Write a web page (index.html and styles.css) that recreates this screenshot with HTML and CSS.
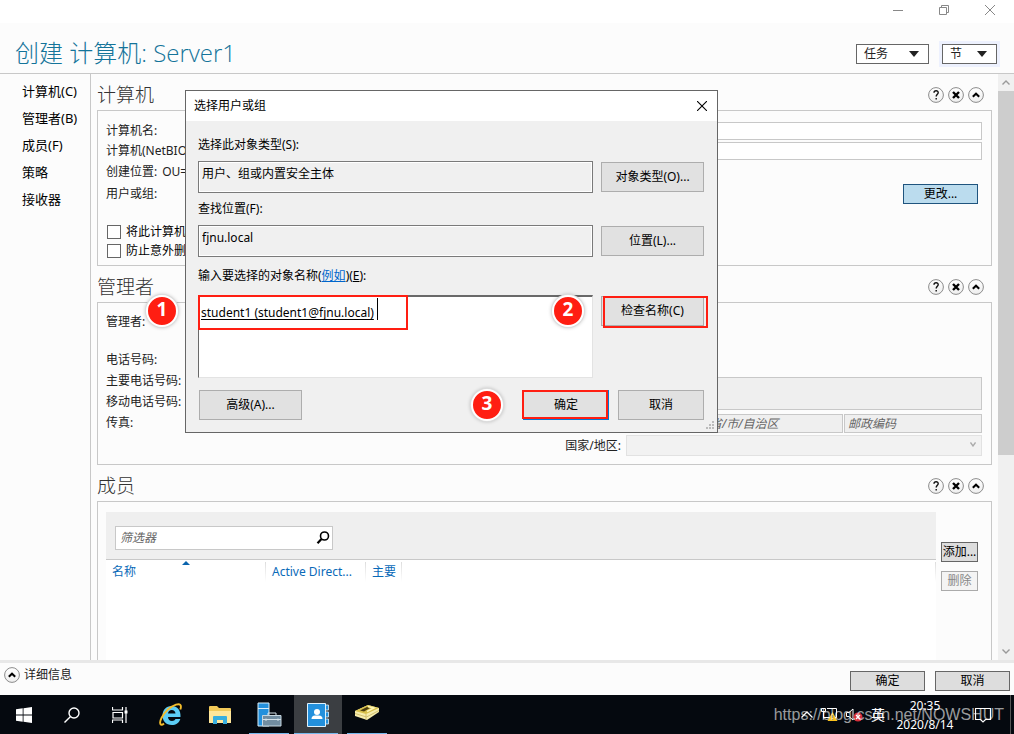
FILE: index.html
```html
<!DOCTYPE html>
<html lang="zh-CN">
<head>
<meta charset="utf-8">
<title>创建 计算机: Server1</title>
<meta name="viewport" content="width=device-width, initial-scale=1">
<link rel="stylesheet" href="styles.css">
</head>
<body>
<svg class="defs" width="0" height="0" aria-hidden="true">
  <defs>
    <linearGradient id="ring" x1="0" y1="0" x2="0" y2="1"><stop offset="0" stop-color="#fff"/><stop offset="1" stop-color="#eee"/></linearGradient>
    <symbol id="help" viewBox="0 0 16 16"><circle cx="8" cy="8" r="7.4" fill="url(#ring)" stroke="#8c8c8c"/><path d="M6 5.8C6 3 10.4 3 10.2 5.8C10.1 7.3 8.2 7.4 8.2 9.6M8.2 11V12.4" fill="none" stroke="#111" stroke-width="1.4"/></symbol>
    <symbol id="remove" viewBox="0 0 16 16"><circle cx="8" cy="8" r="7.4" fill="url(#ring)" stroke="#8c8c8c"/><path d="M5 5L11 11M11 5L5 11" stroke="#000" stroke-width="2.4"/></symbol>
    <symbol id="fold" viewBox="0 0 16 16"><circle cx="8" cy="8" r="7.4" fill="url(#ring)" stroke="#8c8c8c"/><path d="M4.8 9.8L8 6.7L11.2 9.8" fill="none" stroke="#000" stroke-width="2"/></symbol>
  </defs>
</svg>
<div class="desktop">
  <div class="titlebar">
    <button class="caption" aria-label="最小化"><svg width="10" height="10" viewBox="0 0 10 10"><path d="M0 5.5H10" stroke="#888"/></svg></button>
    <button class="caption" aria-label="还原"><svg width="10" height="10" viewBox="0 0 10 10" fill="none" stroke="#888"><path d="M.5 2.5H7.5V9.5H.5ZM2.5 2.5V.5H9.5V7.5H7.5"/></svg></button>
    <button class="caption" aria-label="关闭"><svg width="10" height="10" viewBox="0 0 10 10"><path d="M0 0L10 10M10 0L0 10" stroke="#888"/></svg></button>
  </div>
  <header class="header">
    <h1>创建 计算机: Server1</h1>
    <button class="drop tasks">任务<svg width="10" height="6" viewBox="0 0 10 6"><path d="M0 0H10L5 6Z" fill="#222"/></svg></button>
    <button class="drop sections">节<svg width="10" height="6" viewBox="0 0 10 6"><path d="M0 0H10L5 6Z" fill="#222"/></svg></button>
  </header>
  <div class="main">
    <nav class="side">
      <a href="#computer">计算机(C)</a>
      <a href="#manager">管理者(B)</a>
      <a href="#members">成员(F)</a>
      <a href="#policy">策略</a>
      <a href="#silo">接收器</a>
    </nav>
    <main class="content">
      <section id="computer">
        <div class="head"><h2>计算机</h2>
          <button aria-label="帮助"><svg><use href="#help"/></svg></button><button aria-label="移除"><svg><use href="#remove"/></svg></button><button aria-label="折叠"><svg><use href="#fold"/></svg></button>
        </div>
        <div class="box computer">
          <div class="fields">
            <label for="cname">计算机名:</label><input id="cname" type="text">
            <label for="nbname">计算机(NetBIO</label><input id="nbname" type="text">
            <div class="place"><span>创建位置:</span><span>OU=</span></div>
            <span>用户或组:</span><button class="change">更改...</button>
          </div>
          <label class="tick"><input type="checkbox">将此计算机</label>
          <label class="tick"><input type="checkbox">防止意外删</label>
        </div>
      </section>
      <section id="manager">
        <div class="head"><h2>管理者</h2>
          <button aria-label="帮助"><svg><use href="#help"/></svg></button><button aria-label="移除"><svg><use href="#remove"/></svg></button><button aria-label="折叠"><svg><use href="#fold"/></svg></button>
        </div>
        <div class="box manager">
          <div class="phones">
            <span class="who">管理者:</span>
            <span>电话号码:</span>
            <span>主要电话号码:</span>
            <span>移动电话号码:</span>
            <span>传真:</span>
          </div>
          <div class="address">
            <textarea class="street" aria-label="街道" disabled></textarea>
            <div class="towns">
              <input type="text" aria-label="城市" disabled>
              <input type="text" aria-label="省" placeholder="省/市/自治区" disabled>
              <input type="text" aria-label="邮编" placeholder="邮政编码" disabled>
            </div>
            <label for="country">国家/地区:</label>
            <div class="country"><select id="country" disabled><option></option></select><svg width="6" height="5" viewBox="0 0 6 5"><path d="M.5 .5L3 4L5.5 .5" fill="none" stroke="#aaa" stroke-width="1.3"/></svg></div>
          </div>
        </div>
      </section>
      <section id="members">
        <div class="head"><h2>成员</h2>
          <button aria-label="帮助"><svg><use href="#help"/></svg></button><button aria-label="移除"><svg><use href="#remove"/></svg></button><button aria-label="折叠"><svg><use href="#fold"/></svg></button>
        </div>
        <div class="box members">
          <div class="list">
            <div class="filter"><div class="search"><input type="text" aria-label="筛选器" placeholder="筛选器"><svg width="14" height="14" viewBox="0 0 14 14" fill="none" stroke="#000"><circle cx="8.5" cy="5" r="4" stroke-width="1.6"/><path d="M5.5 8L1.5 12.3" stroke-width="2.2"/></svg></div></div>
            <table>
              <thead><tr><th class="name">名称<svg class="sort" width="8" height="4" viewBox="0 0 8 4"><path d="M0 4L4 0L8 4Z" fill="#0a64ad"/></svg></th><th class="dir">Active Direct...</th><th class="primary">主要</th><th></th></tr></thead>
            </table>
          </div>
          <div class="actions"><button>添加...</button><button disabled>删除</button></div>
        </div>
      </section>
    </main>
    <div class="scroll">
      <button aria-label="向上"><svg width="8" height="5" viewBox="0 0 8 5"><path d="M.5 4.5L4 1L7.5 4.5" fill="none" stroke="#999" stroke-width="1.4"/></svg></button>
      <div class="track"><div class="thumb"></div></div>
      <button aria-label="向下"><svg width="8" height="5" viewBox="0 0 8 5"><path d="M.5 .5L4 4L7.5 .5" fill="none" stroke="#999" stroke-width="1.4"/></svg></button>
    </div>
  </div>
  <footer class="footer">
    <button class="details"><svg><use href="#fold"/></svg>详细信息</button>
    <button class="act">确定</button>
    <button class="act">取消</button>
  </footer>

  <div class="dialog" role="dialog" aria-labelledby="dtitle">
    <div class="dbar"><h3 id="dtitle">选择用户或组</h3><button aria-label="关闭"><svg width="10" height="10" viewBox="0 0 10 10"><path d="M0 0L10 10M10 0L0 10" stroke="#000" stroke-width="1.1"/></svg></button></div>
    <div class="dbody">
      <div class="grid">
        <label for="otype">选择此对象类型(S):</label>
        <input id="otype" type="text" readonly value="用户、组或内置安全主体">
        <button>对象类型(O)...</button>
        <label for="loc">查找位置(F):</label>
        <input id="loc" type="text" readonly value="fjnu.local">
        <button>位置(L)...</button>
        <label for="names">输入要选择的对象名称(<a href="#names">例如</a>)(<u>E</u>):</label>
        <textarea id="names" spellcheck="false">student1 (student1@fjnu.local)</textarea>
        <button>检查名称(C)</button>
      </div>
      <div class="dfoot"><button class="adv">高级(A)...</button><button class="ok">确定</button><button class="cancel">取消</button></div>
    </div>
    <svg class="grip" width="9" height="9" viewBox="0 0 9 9" fill="#bbb"><path d="M6 0h2v2H6zM3 3h2v2H3zM6 3h2v2H6zM0 6h2v2H0zM3 6h2v2H3zM6 6h2v2H6z"/></svg>
    <span class="cursor"></span>
    <span class="mark mark-name"></span><span class="mark mark-check"></span><span class="mark mark-ok"></span>
    <span class="step step-1">1</span><span class="step step-2">2</span><span class="step step-3">3</span>
  </div>

  <div class="taskbar">
    <button class="task" aria-label="开始"><svg width="16" height="16" viewBox="0 0 16 16" fill="#fff"><path d="M0 2.3L6.7 1.3V7.6H0ZM7.5 1.2L16 0V7.6H7.5ZM0 8.4H6.7V14.7L0 13.7ZM7.5 8.4H16V16L7.5 14.8Z"/></svg></button>
    <button class="task" aria-label="搜索"><svg width="16" height="16" viewBox="0 0 16 16" fill="none" stroke="#fff" stroke-width="1.4"><circle cx="10" cy="6" r="5"/><path d="M6.3 9.7L.5 15.5"/></svg></button>
    <button class="task" aria-label="任务视图"><svg width="16" height="16" viewBox="0 0 16 16" fill="none" stroke="#fff" stroke-width="1.2"><path d="M.5 0V3H10.5V0M1 5.5H10.5V11H1ZM.5 16V13H10.5V16M14 0V16"/><path d="M12.5 3.5H15.5V6.5H12.5Z" fill="#fff" stroke="none"/></svg></button>
    <button class="task apps" aria-label="Internet Explorer"><svg width="24" height="24" viewBox="0 0 24 24"><path fill-rule="evenodd" d="M12.500 3C18.500 3 22 7.500 21.500 14H9C9.200 16.500 10.700 18 13 18C14.800 18 15.900 17.300 16.500 16H21.300C20 20 17 22 12.800 22C7 22 3.500 18 3.500 12.500C3.500 7 7.200 3 12.500 3ZM9 10.500H16.500C16.300 8.300 14.900 7 12.800 7C10.700 7 9.300 8.300 9 10.500Z" fill="#5ccdf5"/><path d="M5 20.500C2 23.500 -.5 21 2.500 15C6 8.500 12 3.500 17 1.700C21 .3 23 2 21.300 6.500" fill="none" stroke="#f3bd2c" stroke-width="1.900"/></svg></button>
    <button class="task" aria-label="文件资源管理器"><svg width="22" height="20" viewBox="0 0 22 20"><path d="M0 2Q0 1 1 1H8L10 3H21Q22 3 22 4V18H0Z" fill="#f2ca59"/><path d="M0 6H22V18H0Z" fill="#ffe69a"/><path d="M4 19V12Q4 11 5 11H17Q18 11 18 12V19H14V15H8V19Z" fill="#38aede"/></svg></button>
    <button class="task open" aria-label="服务器管理器"><svg width="25" height="25" viewBox="0 0 25 25"><path d="M1 1H12V24H1Z" fill="#2390dc" stroke="#d7eefa"/><path d="M1 6.5H12" stroke="#d7eefa"/><path d="M5.500 13.500H24V24H5.500Z" fill="#718da1" stroke="#c7d7e0"/><path d="M11 13V11H19V13M6 17.500H24M9 16.500V19M21 16.500V19" fill="none" stroke="#d5e2e9"/></svg></button>
    <button class="task open active" aria-label="Active Directory 管理中心"><svg width="22" height="24" viewBox="0 0 22 24"><path d="M18 2H21.500V7H18ZM18 9H21.500V14H18ZM18 16H21.500V21H18Z" fill="#2390dc" stroke="#d7eefa" stroke-width=".8"/><path d="M.5 .5H18.500V23.500H.5Z" fill="#2390dc" stroke="#e0f2fc"/><circle cx="10" cy="9" r="3" fill="#fff"/><path d="M4.500 16Q4.500 12.500 8 12.500H12Q15.500 12.500 15.500 16Z" fill="#fff"/></svg></button>
    <button class="task open" aria-label="工具"><svg class="books" width="24" height="15" viewBox="0 0 24 15"><path d="M0 6L13 0L24 3V7L12 15L0 11Z" fill="#f6ecae"/><path d="M0 6L13 0L24 3L11 9Z" fill="#d8c04c"/><path d="M5 5.500L12 2L15 3L9 6.500Z" fill="#4b3d0e"/><path d="M13 1.500L19 3L12 6.500" fill="none" stroke="#fff6b8" stroke-width="1.500"/><path d="M0 8.500L11.500 12L24 5.500M11 9V14.500" fill="none" stroke="#c9b660" stroke-width=".8"/></svg></button>
    <div class="tray">
      <svg width="12" height="7" viewBox="0 0 12 7"><path d="M.5 6.500L6 1L11.500 6.500" fill="none" stroke="#fff" stroke-width="1.300"/></svg>
      <svg width="17" height="15" viewBox="0 0 17 15"><path d="M.5 1.500H4.500V4.500H.5ZM2.500 4.500V11.500M6 1.500H15.500V10.500H3" fill="none" stroke="#fff"/><path d="M11.500 5L16.500 14H6.500Z" fill="#fbc21c"/><path d="M11.500 8V11M11.500 12V13" stroke="#222" stroke-width="1.200"/></svg>
      <svg width="17" height="15" viewBox="0 0 17 15"><path d="M.5 5.500H3L7 2V13L3 9.500H.5Z" fill="none" stroke="#fff"/><circle cx="12" cy="10" r="4.500" fill="#d7303a"/><path d="M10 8L14 12M14 8L10 12" stroke="#fff" stroke-width="1.300"/></svg>
      <span class="ime">英</span>
      <div class="clock"><span>20:35</span><span>2020/8/14</span></div>
      <svg class="note" width="16" height="16" viewBox="0 0 16 16"><path d="M.5 1.500H15.500V12.500H10.500L8 15L5.500 12.500H.5Z" fill="none" stroke="#fff" stroke-width="1.200"/></svg>
    </div>
    <span class="watermark">https://blog.csdn.net/NOWSHUT</span>
  </div>
</div>
</body>
</html>
```

FILE: styles.css
```css
* { box-sizing: border-box; }
body { margin: 0; font: 12px/16px "Noto Sans", "Noto Sans CJK SC", sans-serif; color: #222; background: #fcfcfc; }
button, input, select, textarea { font: inherit; color: inherit; margin: 0; border-radius: 0; }
button { padding: 0; border: 0; background: none; white-space: nowrap; }
svg { display: block; flex: none; }
h1, h2, h3 { margin: 0; font-weight: 300; }
.defs { position: absolute; }
.desktop { position: relative; height: 100vh; display: flex; flex-direction: column; overflow: hidden; }

.titlebar { height: 23px; background: #fff; display: flex; justify-content: flex-end; flex: none; padding-right: 1px; }
.caption { width: 46px; height: 20px; display: grid; place-items: center; }
.header { height: 51px; flex: none; display: flex; align-items: center; padding: 9px 17px 0 15px; border-bottom: 1px solid #c8c8c8; }
.header h1 { flex: 1; font-size: 24px; line-height: 36px; color: #14749a; font-family: "Open Sans", "Noto Sans CJK SC", sans-serif; }
.drop { height: 20px; margin-top: 3px; border: 1px solid #666; background: #fff; display: flex; align-items: center; justify-content: space-between; padding: 0 9px 0 7px; }
.tasks { width: 73px; }
.sections { width: 55px; margin-left: 13px; box-shadow: 0 0 0 3px #edf1fe; }

.main { flex: 1; min-height: 0; display: flex; }
.side { width: 91px; flex: none; border-right: 1px solid #c8c8c8; padding: 4px 0 0 22px; display: flex; flex-direction: column; }
.side a { color: #000; text-decoration: none; font-size: 13px; line-height: 27px; white-space: nowrap; }
.content { flex: 1; min-width: 0; padding: 0 6px; overflow: hidden; display: flex; flex-direction: column; }
.content section { flex: none; }
.content #members { flex: 1; display: flex; flex-direction: column; min-height: 0; }
.head { height: 36px; padding: 6px 8px 0 0; display: flex; align-items: center; gap: 4px; flex: none; }
.head h2 { flex: 1; font-size: 19px; line-height: 28px; color: #333; }
.head svg, .details svg { width: 16px; height: 16px; }
.box { border: 1px solid #c8c8c8; padding: 0 9px 0 8px; }
.computer { height: 156px; padding-top: 10px; }
.fields { display: grid; grid-template-columns: 110px 1fr; grid-template-rows: 20px 20px 22px 22px; align-items: center; margin-bottom: 17px; white-space: nowrap; }
.fields input { height: 18px; width: 100%; border: 1px solid #c8c8c8; background: #fff; }
.place { grid-column: 1 / 3; display: flex; gap: 5px; }
.change { justify-self: end; margin-right: 4px; width: 75px; height: 20px; border: 1px solid #1f547e; background: #bbdcee; color: #000; }
.tick { display: flex; align-items: center; gap: 5px; height: 19px; color: #000; padding-left: 1px; }
.tick input { appearance: none; width: 14px; height: 14px; border: 1px solid #666; background: #fff; }

.manager { display: flex; justify-content: space-between; padding-top: 8px; padding-bottom: 8px; height: 163px; }
.phones { display: flex; flex-direction: column; line-height: 21px; }
.phones .who { margin-bottom: 17px; }
.address { width: 418px; padding-top: 66px; display: grid; grid-template-columns: 57px 1fr; column-gap: 5px; grid-template-rows: 33px 17px 21px; row-gap: 4px; align-items: center; }
.address label { text-align: right; white-space: nowrap; }
.street, .towns { grid-column: 2; }
.street, .towns input { width: 100%; height: 100%; border: 1px solid #c8c8c8; background: #efefef; resize: none; display: block; padding: 0 3px; min-width: 0; }
.street { height: 33px; }
.towns { height: 17px; display: grid; grid-template-columns: 1fr 137px 138px; gap: 1px; }
input::placeholder { color: #666; font-style: italic; opacity: 1; }
.country { position: relative; }
.country select { appearance: none; display: block; width: 100%; height: 21px; border: 1px solid #d8d8d8; background: #efefef; }
.country svg { position: absolute; right: 6px; top: 7px; }

.members { flex: 1; border-bottom: 0; padding: 10px 13px 0 8px; display: flex; gap: 5px; }
.list { flex: 1; background: #fff; display: flex; flex-direction: column; }
.filter { height: 48px; background: #efefef; border-bottom: 1px solid #c8c8c8; padding: 14px 9px 9px; flex: none; }
.search { width: 218px; height: 24px; background: #fff; border: 1px solid #c8c8c8; display: flex; align-items: center; padding: 0 2px 0 4px; }
.search input { flex: 1; min-width: 0; padding: 0; border: 0; background: none; outline: 0; }
table { width: 100%; table-layout: fixed; border-collapse: collapse; }
th { height: 24px; padding: 0 0 0 6px; text-align: left; font-weight: 400; color: #0a6ab8; white-space: nowrap; position: relative; background: linear-gradient(#ddd, #fff) right / 1px 20px no-repeat; }
.name { width: 160px; }
.dir { width: 100px; }
.primary { width: 36px; }
.sort { position: absolute; left: 76px; top: 1px; }
.actions { width: 37px; padding-top: 30px; display: flex; flex-direction: column; gap: 9px; }
.actions button { height: 20px; border: 1px solid #666; background: #ddd; color: #000; }
.actions button:disabled { border-color: #aaa; background: #f4f4f4; color: #888; }

.scroll { width: 16px; flex: none; background: #f0f0f0; display: flex; flex-direction: column; }
.scroll button { height: 17px; display: grid; place-items: center; }
.track { flex: 1; }
.thumb { height: 66%; background: #cdcdcd; }

.footer { height: 35px; flex: none; border-top: 3px solid #e8e8e8; padding: 4px 4px 0; display: flex; align-items: flex-start; gap: 10px; }
.details { display: flex; align-items: center; gap: 4px; margin-right: auto; }
.act { width: 75px; height: 20px; margin-top: 4px; border: 1px solid #666; background: #ddd; color: #000; }

.dialog { position: absolute; left: 185px; top: 90px; width: 533px; border: 1px solid #666; background: #f0f0f0; color: #000; }
.dbar { height: 30px; background: #fff; display: flex; align-items: center; padding: 0 10px 0 8px; }
.dbar h3 { flex: 1; font-size: 12px; font-weight: 400; }
.dbody { padding: 8px 13px 12px 12px; }
.grid { display: grid; grid-template-columns: 1fr 103px; grid-template-rows: 32px 32px 32px 32px 38px 83px; column-gap: 8px; }
.grid label { grid-column: 1 / 3; align-self: center; }
.grid a { color: #06c; }
.grid input { height: 32px; border: 1px solid #7a7a7a; background: #f0f0f0; box-shadow: inset 0 0 0 1px #fff; padding: 0 3px 8px; min-width: 0; }
.grid textarea { border: 1px solid #e3e3e3; border-top: 2px solid #696969; border-left-color: #696969; background: #fff; resize: none; outline: 0; padding: 8px 2px; text-decoration: underline; text-underline-offset: 2px; text-decoration-skip-ink: none; min-width: 0; display: block; height: 83px; }
.grid button, .dfoot button { height: 30px; border: 1px solid #adadad; background: #e1e1e1; }
.grid button { margin-top: 1px; }
.dfoot { display: flex; margin-top: 12px; padding-left: 1px; gap: 9px; }
.adv { width: 103px; margin-right: auto; }
.ok, .cancel { width: 86px; }
.dfoot .ok { border-color: #0078d7; }
.grip { position: absolute; right: 2px; bottom: 2px; }
.cursor { position: absolute; left: 191px; top: 207px; width: 1px; height: 22px; background: #000; }
.mark { position: absolute; border: 2px solid #ff1e12; pointer-events: none; }
.mark-name { left: 12px; top: 204px; width: 210px; height: 35px; }
.mark-check { left: 417px; top: 205px; width: 105px; height: 32px; }
.mark-ok { left: 336px; top: 299px; width: 86px; height: 29px; }
.step { position: absolute; width: 32px; height: 32px; border: 2px solid #fff; border-radius: 50%; background: #ff1e12; box-shadow: 0 0 0 1px #ddd, 0 0 4px #0005; color: #fff; font: bold 19px/25px "Noto Sans", sans-serif; text-align: center; }
.step-1 { left: -40px; top: 204px; }
.step-2 { left: 366px; top: 204px; }
.step-3 { left: 285px; top: 298px; }

.taskbar { position: relative; height: 39px; flex: none; background: #05090f; display: flex; color: #fff; }
.task { width: 48px; height: 39px; display: grid; place-items: center; }
.apps { margin-left: 3px; }
.apps, .apps ~ .task { margin-right: 1px; }
.open { background: linear-gradient(#76b9ed, #76b9ed) center bottom / 40px 1px no-repeat; }
.active { background: linear-gradient(#76b9ed, #76b9ed) left bottom / 44px 1px no-repeat, #3b3e42; }
.books { margin-bottom: 4px; }
.tray { margin-left: auto; display: flex; align-items: center; gap: 8px; padding-right: 3px; margin-right: 3px; border-right: 1px solid #555; }
.ime { font-size: 14px; }
.clock { width: 64px; display: flex; flex-direction: column; text-align: center; line-height: 19px; }
.note { margin: 0 16px 0 10px; }
.watermark { position: absolute; right: 10px; top: 10px; font: 16px/20px "Liberation Sans", sans-serif; color: #ffffff99; }
```
